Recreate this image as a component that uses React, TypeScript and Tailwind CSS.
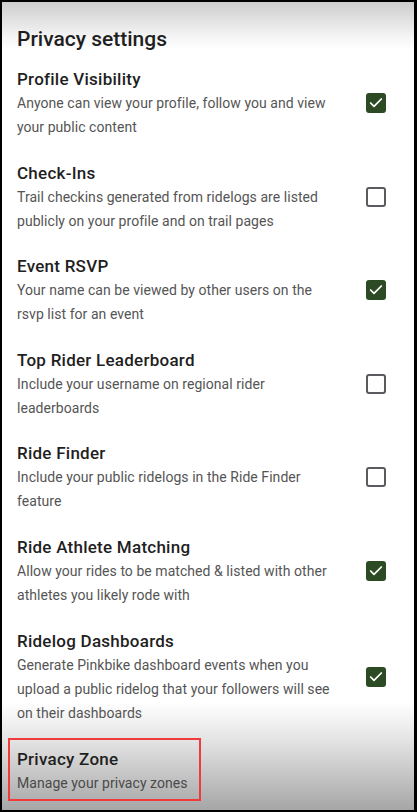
import { Check } from 'lucide-react'

type Setting = {
  title: string
  description: string
  checked: boolean
}

const settings: Setting[] = [
  {
    title: 'Profile Visibility',
    description: 'Anyone can view your profile, follow you and view your public content',
    checked: true,
  },
  {
    title: 'Check-Ins',
    description: 'Trail checkins generated from ridelogs are listed publicly on your profile and on trail pages',
    checked: false,
  },
  {
    title: 'Event RSVP',
    description: 'Your name can be viewed by other users on the rsvp list for an event',
    checked: true,
  },
  {
    title: 'Top Rider Leaderboard',
    description: 'Include your username on regional rider leaderboards',
    checked: false,
  },
  {
    title: 'Ride Finder',
    description: 'Include your public ridelogs in the Ride Finder feature',
    checked: false,
  },
  {
    title: 'Ride Athlete Matching',
    description: 'Allow your rides to be matched & listed with other athletes you likely rode with',
    checked: true,
  },
  {
    title: 'Ridelog Dashboards',
    description:
      'Generate Pinkbike dashboard events when you upload a public ridelog that your followers will see on their dashboards',
    checked: true,
  },
]

function Checkbox({ checked }: { checked: boolean }) {
  if (checked) {
    return (
      <div className="w-5 h-5 shrink-0 rounded-[3px] bg-[#2c4a24] flex items-center justify-center">
        <Check className="w-4 h-4 text-white" strokeWidth={2.6} />
      </div>
    )
  }
  return <div className="w-5 h-5 shrink-0 rounded-[3px] border-2 border-[#5a5a5f] bg-white" />
}

export default function App() {
  return (
    <div className="w-[417px] h-[812px] bg-black pt-[2px] pl-[2px] pr-[3px] pb-[2px]">
      <div
        className="h-full w-full overflow-hidden bg-[linear-gradient(to_bottom,#cdcdcd_0px,#f4f4f4_34px,#ffffff_48px,#ffffff_700px,#e2e2e2_740px,#a6a6a6_100%)]"
        style={{ fontFamily: 'Roboto, "Noto Sans", sans-serif' }}
      >
        {/* Header */}
        <h1 className="pl-[15px] pt-[24px] text-[21px] leading-[26px] font-medium text-[#1f1f1f]">
          Privacy settings
        </h1>

        {/* Settings list */}
        <div className="mt-[15px] flex flex-col gap-[21.6px]">
          {settings.map((s) => (
            <div key={s.title} className="flex items-center pl-[15px] pr-[28px]">
              <div className="flex-1">
                <div className="text-[17px] leading-[24px] font-medium tracking-[0.25px] text-[#1f1f1f]">
                  {s.title}
                </div>
                <p className="w-[322px] text-[14px] leading-[24px] tracking-[0.05px] text-[#555555]">
                  {s.description}
                </p>
              </div>
              <Checkbox checked={s.checked} />
            </div>
          ))}
        </div>

        {/* Privacy zone link */}
        <div className="mt-[13px] ml-[6px] w-[193px] border-2 border-[#ef3b3b] pl-[7px] pt-[7px] pb-[4px]">
          <div className="text-[17px] leading-[24px] font-medium tracking-[0.25px] text-[#1f1f1f]">Privacy Zone</div>
          <div className="text-[14px] leading-[24px] tracking-[0.05px] text-[#4a4a4a]">Manage your privacy zones</div>
        </div>
      </div>
    </div>
  )
}
